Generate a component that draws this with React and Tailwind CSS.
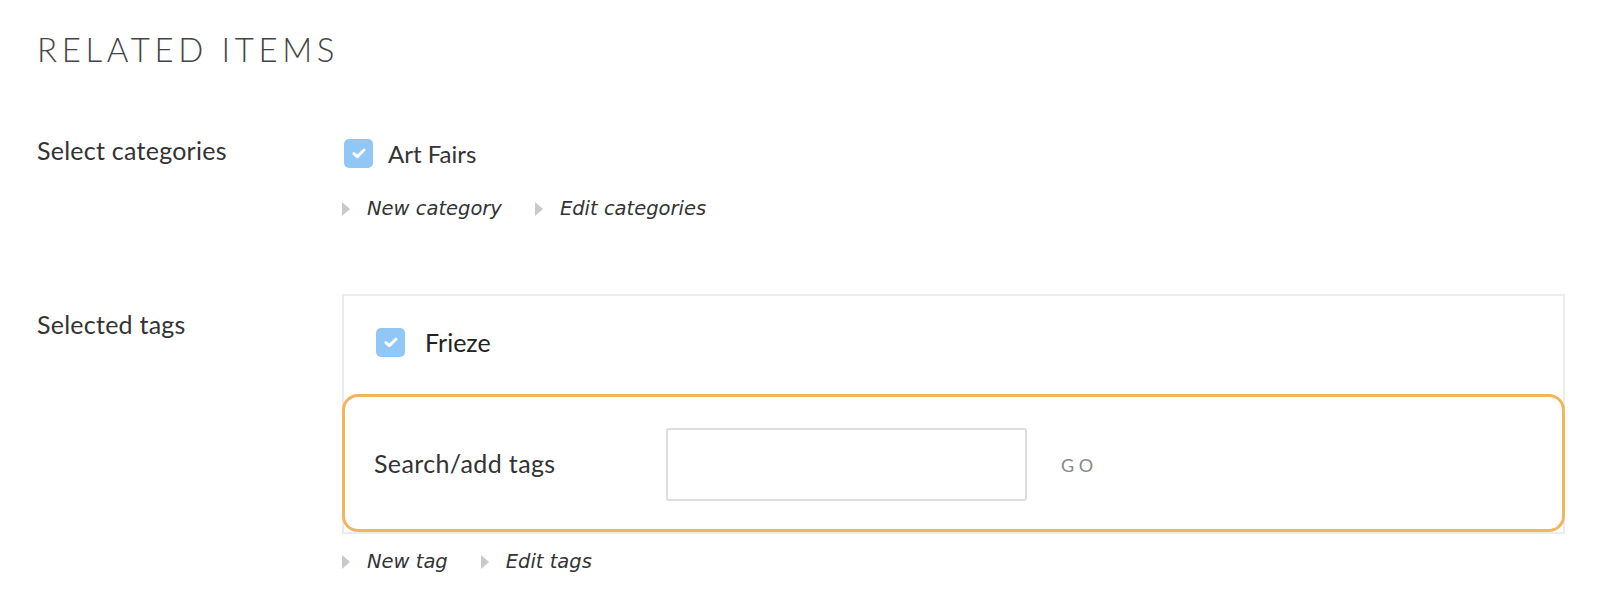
const sans = "font-['Lato','Noto_Sans',sans-serif]";
const linkFont = "font-['DejaVu_Sans','Verdana',sans-serif]";

function Checkbox() {
  return (
    <span className="w-[29px] h-[29px] rounded-[5px] bg-[#90c7f6] flex items-center justify-center flex-shrink-0">
      <svg width="14" height="11" viewBox="0 0 14 11" fill="none">
        <path d="M2 5.6 5.3 8.7 12 2" stroke="white" strokeWidth="3" strokeLinecap="round" strokeLinejoin="round" />
      </svg>
    </span>
  );
}

function Arrow() {
  return (
    <span className="w-0 h-0 border-l-[8px] border-l-[#c9c9c9] border-y-[7px] border-y-transparent flex-shrink-0" />
  );
}

function LinkRow({ links, className = "" }) {
  return (
    <div className={`flex items-center h-[24px] ${className}`}>
      {links.map((label, i) => (
        <div key={label} className={`flex items-center ${i > 0 ? "ml-[33px]" : ""}`}>
          <Arrow />
          <a className={`ml-[17px] italic text-[19.5px] leading-[24px] text-[#333] ${linkFont}`}>{label}</a>
        </div>
      ))}
    </div>
  );
}

export default function App() {
  return (
    <div className={`bg-white min-h-[616px] pl-[37px] pr-[45px] pt-[29px] text-[#333] ${sans}`}>
      <h2 className="text-[33px] leading-[40px] tracking-[0.14em] text-[#444] font-light">RELATED ITEMS</h2>

      {/* Categories */}
      <div className="flex mt-[70px]">
        <div className="w-[307px] flex-shrink-0 text-[25px] leading-[30px] tracking-[0.01em] -mt-[4px]">Select categories</div>
        <div>
          <label className="flex items-center h-[29px]">
            <Checkbox />
            <span className="ml-[15px] text-[24px] leading-[29px]">Art Fairs</span>
          </label>
          <div className="mt-[29px]">
            <LinkRow links={["New category", "Edit categories"]} className="-ml-[2px]" />
          </div>
        </div>
      </div>

      {/* Tags */}
      <div className="flex mt-[73px]">
        <div className="w-[305px] flex-shrink-0 text-[25px] leading-[30px] tracking-[0.01em] pt-[15px]">Selected tags</div>
        <div className="flex-1">
          <div className="border-2 border-[#ebebeb]">
            <label className="flex items-center h-[29px] mt-[32px] pl-[32px]">
              <Checkbox />
              <span className="ml-[20px] text-[25px] leading-[29px] text-[#222]">Frieze</span>
            </label>
            <div className="-mx-[2px] mt-[37px] border-[3px] border-[#f3b55a] rounded-[16px] pt-[31px] pb-[28px] pl-[29px] flex items-center">
              <span className="w-[292px] flex-shrink-0 text-[25px] leading-[30px] tracking-[0.015em] -mt-[4px]">Search/add tags</span>
              <input type="text" className="w-[361px] h-[73px] border-2 border-[#dedede] rounded-[3px] outline-none" />
              <button className="ml-[34px] text-[18px] leading-[24px] tracking-[0.25em] text-[#888]">GO</button>
            </div>
          </div>
          <div className="mt-[16px]">
            <LinkRow links={["New tag", "Edit tags"]} />
          </div>
        </div>
      </div>
    </div>
  );
}
